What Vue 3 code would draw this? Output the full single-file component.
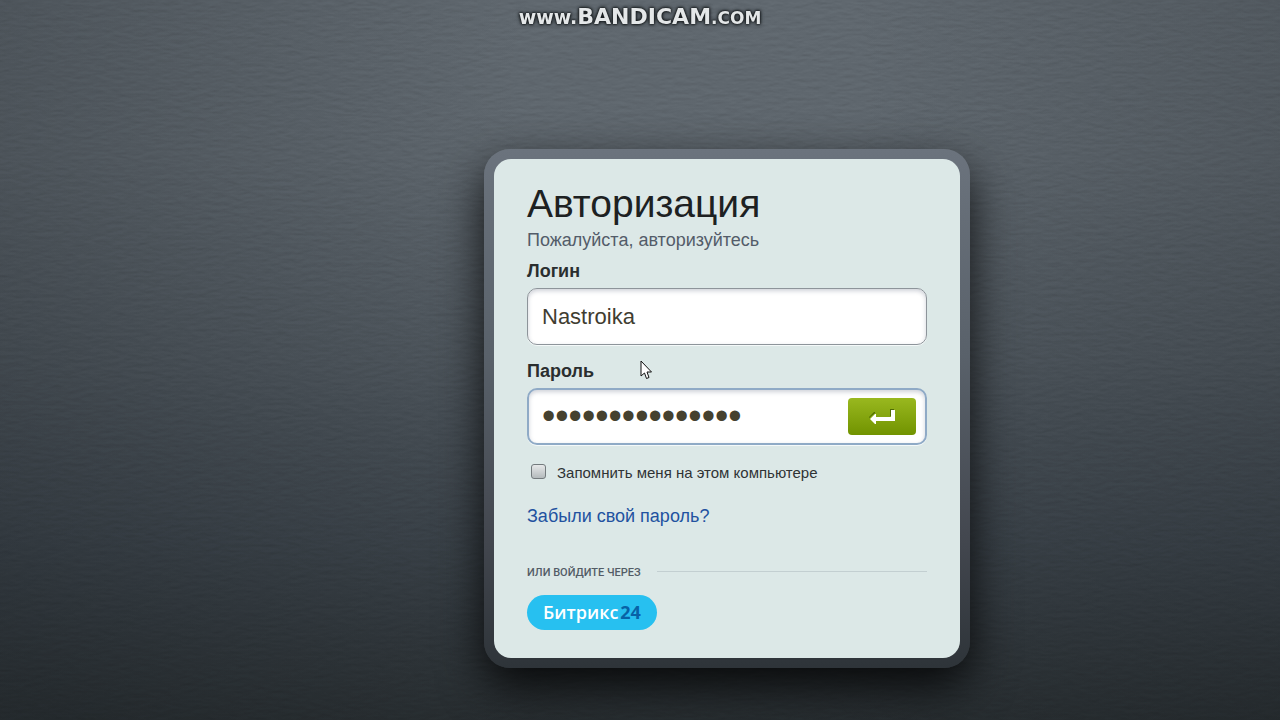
<script setup>
import { ref } from 'vue'

const login = ref('Nastroika')
const password = ref('nastroika123456')
const remember = ref(false)
</script>

<template>
  <div class="page">
    <svg class="texture" aria-hidden="true">
      <filter id="leather" x="0" y="0" width="100%" height="100%" color-interpolation-filters="sRGB">
        <feTurbulence type="fractalNoise" baseFrequency="0.08 0.26" numOctaves="3" seed="7" result="noise" />
        <feDiffuseLighting in="noise" surfaceScale="1" diffuseConstant="0.7" lighting-color="#ffffff">
          <feDistantLight azimuth="270" elevation="45" />
        </feDiffuseLighting>
      </filter>
      <rect width="100%" height="100%" filter="url(#leather)" />
    </svg>

    <div class="watermark"><span class="www">www.</span><span class="brand">BANDICAM</span><span class="com">.com</span></div>

    <main class="stage">
      <form class="card" @submit.prevent>
        <h1>Авторизация</h1>
        <p class="subtitle">Пожалуйста, авторизуйтесь</p>

        <div class="field">
          <label for="login">Логин</label>
          <input id="login" v-model="login" class="box" type="text" autocomplete="off" />
        </div>

        <div class="field">
          <label for="password">Пароль</label>
          <div class="box box-active">
            <input id="password" v-model="password" class="secret" type="password" autocomplete="off" />
            <button class="enter" type="submit" aria-label="Войти">
              <svg width="28" height="18" viewBox="0 0 28 18" aria-hidden="true">
                <path d="M22 1H26V8H7V5L1 10V9L6 4H7V8H22Z" fill="#4f6d05" />
                <path d="M23 2H27V13H8V16H7L2 11L7 6H8V9H23Z" fill="#fff" />
              </svg>
            </button>
          </div>
        </div>

        <label class="remember">
          <input v-model="remember" type="checkbox" />
          <span>Запомнить меня на этом компьютере</span>
        </label>

        <a class="forgot" href="#">Забыли свой пароль?</a>

        <div class="divider"><span>или войдите через</span></div>

        <button class="social" type="button">Битрикс<b>24</b></button>
      </form>
    </main>

    <svg class="cursor" width="13" height="21" viewBox="0 0 13 21" aria-hidden="true">
      <path d="M1 1V16L4.500 13L6.500 18.500L9 17.500L7 12H11.500Z" fill="#fff" stroke="#111" />
    </svg>
  </div>
</template>

<style>
body {
  margin: 0;
}
</style>

<style scoped>
.page {
  position: relative;
  min-height: 100vh;
  overflow: hidden;
  font-family: "Liberation Sans", Arial, sans-serif;
  background:
    radial-gradient(ellipse 66% 130% at 54% 12%, rgba(10, 14, 18, 0) 20%, rgba(10, 14, 18, 0.28) 100%),
    linear-gradient(#60686f 0%, #5e666d 22%, #50585f 50%, #3f474e 75%, #2d3336 100%);
}

.texture {
  position: absolute;
  inset: 0;
  width: 100%;
  height: 100%;
  mix-blend-mode: overlay;
  opacity: 0.12;
}

.watermark {
  position: absolute;
  top: 5px;
  left: 0;
  right: 0;
  display: flex;
  align-items: baseline;
  justify-content: center;
  font-family: "DejaVu Sans", sans-serif;
  font-weight: bold;
  line-height: 24px;
  color: #e4e7e8;
  text-shadow: 0 0 2px #14181a, 0 0 3px #14181a, 0 0 4px #14181a;
}

.www {
  font-size: 19px;
}

.brand {
  font-size: 22px;
}

.com {
  font-size: 17px;
  text-transform: uppercase;
}

.stage {
  position: relative;
  display: flex;
  justify-content: center;
  padding: 149px 0 52px 174px;
}

.card {
  box-sizing: border-box;
  width: 486px;
  padding: 33px 43px 38px;
  border-radius: 26px;
  background: linear-gradient(#6b737d 0%, #59616a 40%, #43474f 75%, #2e3439 100%);
  box-shadow: 0 18px 46px rgba(0, 0, 0, 0.85);
  position: relative;
  z-index: 0;
}

.card::before {
  content: "";
  position: absolute;
  inset: 10px;
  z-index: -1;
  border-radius: 17px;
  background: #dce8e7;
}

h1 {
  margin: 0;
  font-size: 39px;
  line-height: 44px;
  font-weight: normal;
  color: #1d2122;
}

.subtitle {
  margin: 3px 0 9px;
  font-size: 18px;
  line-height: 22px;
  color: #535c69;
}

.field {
  display: flex;
  flex-direction: column;
  gap: 6px;
  margin-bottom: 15px;
}

.field label {
  font-size: 18px;
  line-height: 22px;
  font-weight: bold;
  color: #2a2e2f;
}

.box {
  box-sizing: border-box;
  width: 100%;
  height: 57px;
  padding: 0 14px;
  border: 1px solid #8d949a;
  border-radius: 10px;
  background: #fff;
  box-shadow: inset 0 2px 4px rgba(60, 70, 100, 0.25), 0 1px 0 #f4f9f9;
  font: 22px "Liberation Sans", Arial, sans-serif;
  color: #3f3d31;
  outline: none;
}

.box-active {
  display: flex;
  align-items: center;
  padding: 0 9px 0 13px;
  border: 2px solid #8faac6;
}

.secret {
  flex: 1;
  min-width: 0;
  padding: 0;
  border: 0;
  background: none;
  font: 38px "Liberation Sans", Arial, sans-serif;
  color: #45412f;
  outline: none;
}

.enter {
  display: flex;
  align-items: center;
  justify-content: center;
  width: 68px;
  height: 37px;
  padding: 0;
  border: 0;
  border-radius: 4px;
  background: linear-gradient(#99b81f, #719300);
}

.remember {
  display: flex;
  align-items: center;
  gap: 11px;
  padding: 4px 0 0 4px;
  font-size: 15px;
  line-height: 18px;
  color: #2f3335;
}

.remember input {
  appearance: none;
  box-sizing: border-box;
  width: 15px;
  height: 15px;
  margin: 0 0 3px;
  border: 1px solid #737a7d;
  border-radius: 3px;
  background: linear-gradient(#e6e8e9, #b4babc);
}

.remember input:checked {
  background: #5b82ad;
}

.forgot {
  display: block;
  width: fit-content;
  margin-top: 23px;
  font-size: 18px;
  line-height: 22px;
  color: #2252a0;
  text-decoration: none;
}

.divider {
  display: flex;
  align-items: center;
  gap: 16px;
  margin-top: 38px;
  font: 500 11px/16px Roboto, "Open Sans", sans-serif;
  text-transform: uppercase;
  color: #535c66;
}

.divider::after {
  content: "";
  flex: 1;
  height: 1px;
  margin-bottom: 4px;
  background: #c3cfd1;
}

.social {
  display: block;
  width: 130px;
  height: 35px;
  margin-top: 14px;
  padding: 0 0 2px;
  border: 0;
  border-radius: 18px;
  background: #27c0f0;
  font: 600 18px "Open Sans", sans-serif;
  color: #fff;
}

.social b {
  margin-left: 2px;
  font-weight: 700;
  color: #0862a6;
}

.cursor {
  position: absolute;
  top: 360px;
  left: 640px;
}
</style>
